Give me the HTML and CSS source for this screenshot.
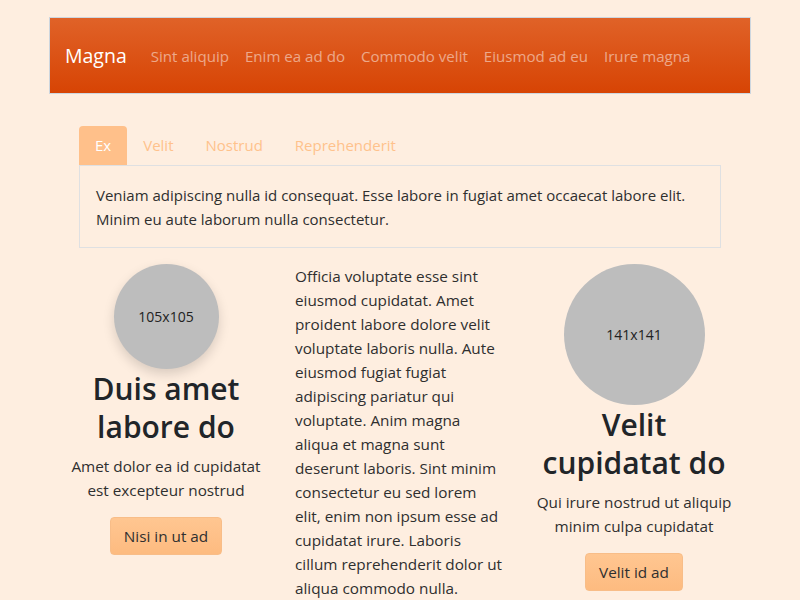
FILE: index.html
```html
<!DOCTYPE html>
<html>
<head>
<meta charset="utf-8">
<link rel="stylesheet" href="styles.css">
</head>
<body>
<div class="container">
  <nav class="navbar">
    <span class="brand">Magna</span>
    <a class="nav-link">Sint aliquip</a>
    <a class="nav-link">Enim ea ad do</a>
    <a class="nav-link">Commodo velit</a>
    <a class="nav-link">Eiusmod ad eu</a>
    <a class="nav-link">Irure magna</a>
  </nav>

  <section class="tabs">
    <div class="tab-list">
      <span class="tab active">Ex</span>
      <span class="tab">Velit</span>
      <span class="tab">Nostrud</span>
      <span class="tab">Reprehenderit</span>
    </div>
    <div class="tab-panel">
      Veniam adipiscing nulla id consequat. Esse labore in fugiat amet occaecat labore elit. Minim eu aute laborum nulla consectetur.
    </div>
  </section>

  <section class="row">
    <div class="col center">
      <div class="avatar small shadow">105x105</div>
      <h2 class="title">Duis amet labore do</h2>
      <p class="lead">Amet dolor ea id cupidatat est excepteur nostrud</p>
      <a class="btn">Nisi in ut ad</a>
    </div>
    <div class="col">
      <p class="body-text">Officia voluptate esse sint eiusmod cupidatat. Amet proident labore dolore velit voluptate laboris nulla. Aute eiusmod fugiat fugiat adipiscing pariatur qui voluptate. Anim magna aliqua et magna sunt deserunt laboris. Sint minim consectetur eu sed lorem elit, enim non ipsum esse ad cupidatat irure. Laboris cillum reprehenderit dolor ut aliqua commodo nulla.</p>
    </div>
    <div class="col center">
      <div class="avatar large">141x141</div>
      <h2 class="title">Velit cupidatat do</h2>
      <p class="lead">Qui irure nostrud ut aliquip minim culpa cupidatat</p>
      <a class="btn">Velit id ad</a>
    </div>
  </section>
</div>
</body>
</html>
```
FILE: styles.css
```css
* { box-sizing: border-box; }
html, body { margin: 0; }
body {
  background: #feeee0;
  font-family: "Open Sans", "Noto Sans", sans-serif;
  font-size: 15.3px;
  line-height: 24px;
  color: #2f2f2f;
}
.container {
  width: 702px;
  margin: 17px auto 0;
}
.navbar {
  height: 77px;
  display: flex;
  align-items: center;
  padding: 0 15px;
  border: 1px solid #cdd6df;
  background: linear-gradient(to bottom, #e06228, #d74404);
}
.brand {
  color: #fff;
  font-size: 19.5px;
  margin-right: 16px;
}
.nav-link {
  color: rgba(255, 255, 255, 0.5);
  font-size: 15.1px;
  padding: 0 8px;
}
.tabs {
  margin: 32px 30px 0;
  font-size: 15px;
}
.tab-list {
  display: flex;
}
.tab {
  padding: 7px 16px 8px;
  color: #ffc28c;
  border-radius: 4px 4px 0 0;
}
.tab.active {
  background: #ffc08a;
  color: #fff;
}
.tab-panel {
  border: 1px solid #dfe0e2;
  padding: 17px 16px 16px;
  color: #2f2f2f;
}
.row {
  display: grid;
  grid-template-columns: repeat(3, 1fr);
  column-gap: 24px;
  padding: 0 12px;
  margin-top: 16px;
}
.col.center {
  display: flex;
  flex-direction: column;
  align-items: center;
  text-align: center;
}
.avatar {
  border-radius: 50%;
  background: #bdbdbd;
  color: #222;
  font-size: 14px;
  display: flex;
  align-items: center;
  justify-content: center;
}
.avatar.small { width: 105px; height: 105px; }
.avatar.large { width: 141px; height: 141px; }
.avatar.shadow { box-shadow: 0 5px 12px rgba(0, 0, 0, 0.15); }
.title {
  margin: 1px 0 8px;
  font-size: 30px;
  line-height: 38px;
  font-weight: 600;
  color: #212529;
}
.lead {
  margin: 0 0 15px;
}
.body-text {
  margin: 0;
}
.btn {
  display: inline-block;
  padding: 6px 13px;
  background: linear-gradient(to bottom, #ffc691, #fdbb80);
  border: 1px solid #f8bd88;
  border-radius: 4px;
  color: #2f2f2f;
}
```
